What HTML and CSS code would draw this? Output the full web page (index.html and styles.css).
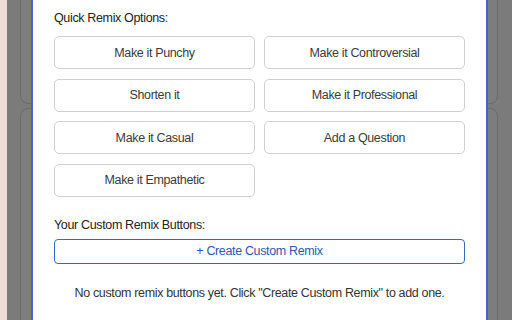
FILE: index.html
```html
<!DOCTYPE html>
<html lang="en">
<head>
  <meta charset="UTF-8" />
  <meta name="viewport" content="width=device-width, initial-scale=1" />
  <title>Quick Remix</title>
  <link rel="stylesheet" href="styles.css">
</head>
<body>
  <div class="edge"></div>

  <div class="backdrop backdrop-left">
    <div class="ghost-card ghost-top"></div>
    <div class="ghost-card"></div>
  </div>

  <div class="panel">
    <h3 class="section-title">Quick Remix Options:</h3>
    <div class="remix-grid">
      <button class="remix-btn">Make it Punchy</button>
      <button class="remix-btn">Make it Controversial</button>
      <button class="remix-btn">Shorten it</button>
      <button class="remix-btn">Make it Professional</button>
      <button class="remix-btn">Make it Casual</button>
      <button class="remix-btn">Add a Question</button>
      <button class="remix-btn">Make it Empathetic</button>
    </div>

    <h3 class="section-title custom-title">Your Custom Remix Buttons:</h3>
    <button class="create-btn">+ Create Custom Remix</button>
    <p class="empty-msg">No custom remix buttons yet. Click "Create Custom Remix" to add one.</p>
  </div>

  <div class="backdrop backdrop-right">
    <div class="ghost-card ghost-top"></div>
    <div class="ghost-card"></div>
  </div>
</body>
</html>
```

FILE: styles.css
```css
html, body {
  height: 320px;
  overflow: hidden;
}
body {
  margin: 0;
  display: flex;
  background: #7b7b7b;
  font-family: "Liberation Sans", Arial, sans-serif;
  color: #333;
}
.edge {
  width: 7px;
  flex: none;
  background: #efddd6;
}
.backdrop {
  width: 24px;
  flex: none;
  overflow: hidden;
  display: flex;
  flex-direction: column;
  gap: 4px;
}
.ghost-card {
  width: 60px;
  height: 400px;
  flex: none;
  border: 1px solid #6b6b6b;
  border-radius: 8px;
  background: #7d7d7d;
}
.ghost-top {
  height: 150px;
  margin-top: -48px;
}
.backdrop-left .ghost-card {
  margin-left: 13px;
}
.backdrop-right .ghost-card {
  margin-left: -52px;
}
.panel {
  width: 411px;
  flex: none;
  background: #fff;
  border-left: 2px solid #4263d2;
  border-right: 2px solid #4263d2;
  padding: 11px 21px 0;
}
.section-title {
  margin: 0 0 10px;
  font-size: 12.5px;
  letter-spacing: -0.35px;
  font-weight: normal;
  line-height: 15px;
  color: #222;
}
.remix-grid {
  display: grid;
  grid-template-columns: 1fr 1fr;
  gap: 9.5px 9px;
}
.remix-btn {
  height: 33px;
  background: #fff;
  border: 1px solid #d0d0d0;
  border-radius: 5px;
  font-family: inherit;
  font-size: 12.5px;
  letter-spacing: -0.35px;
  color: #3a3a3a;
}
.custom-title {
  margin-top: 21px;
  margin-bottom: 6px;
}
.create-btn {
  display: block;
  width: 100%;
  height: 25px;
  background: #fff;
  border: 1px solid #3a66c6;
  border-radius: 4px;
  font-family: inherit;
  font-size: 12.5px;
  letter-spacing: -0.35px;
  color: #2a56ba;
}
.empty-msg {
  margin: 22px 0 0;
  text-align: center;
  font-size: 12.5px;
  letter-spacing: -0.35px;
  line-height: 15px;
  color: #333;
}
```
